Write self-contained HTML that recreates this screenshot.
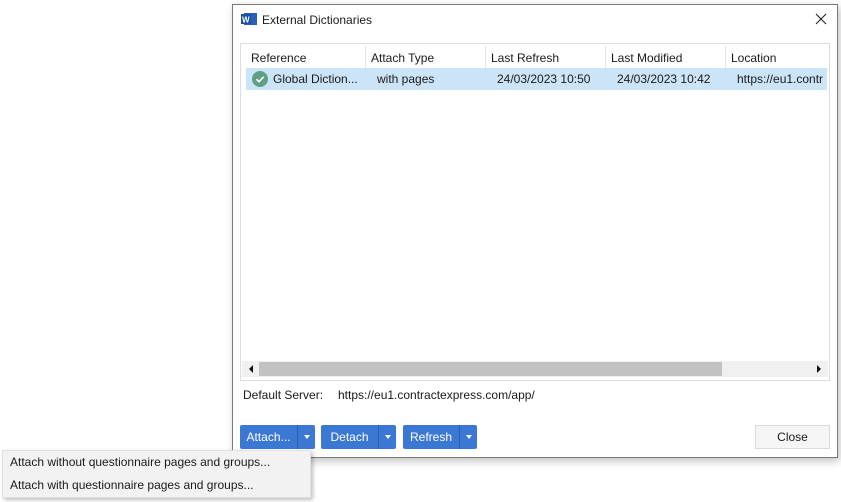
<!DOCTYPE html>
<html><head><style>
*{box-sizing:border-box;margin:0;padding:0}
body{width:841px;height:502px;background:#fff;position:relative;overflow:hidden;font-family:"Liberation Sans",sans-serif;font-size:12px;color:#1a1a1a}
.abs{position:absolute}
.dlg{left:232px;top:4px;width:606px;height:454px;background:#fff;border:1px solid #7a7a7a;box-shadow:2px 3px 8px rgba(0,0,0,.25)}
.col{position:absolute;top:0;height:22px;line-height:24px;padding-left:5px;border-right:1px solid #e3e3e3}
.btn{position:absolute;top:425px;height:24px;background:#3b78d4;color:#fff;line-height:24px;border-radius:2px}
.btn span{position:absolute;top:0;height:24px;text-align:center}
.btn .dd{border-left:1px solid #2a5fae;width:18px}
.dd:after{content:"";position:absolute;left:6px;top:10px;border:3px solid transparent;border-top:4px solid #fff}
</style></head><body>
<div class="abs dlg"></div>
<svg class="abs" style="left:241px;top:12px" width="16" height="14"><rect x="3" y="1" width="13" height="12" fill="#2b5fb8"/><rect x="0" y="2" width="10" height="10" fill="#1e4fa3"/><text x="1" y="10.5" font-size="8" font-weight="bold" fill="#fff" font-family="Liberation Sans">W</text></svg>
<div class="abs" style="left:262px;top:13px;font-size:12px">External Dictionaries</div>
<svg class="abs" style="left:815px;top:13px" width="12" height="12"><path d="M1 1L11 11M11 1L1 11" stroke="#222" stroke-width="1.1"/></svg>
<div class="abs" style="left:240px;top:43px;width:590px;height:338px;border:1px solid #dcdcdc"></div>
<div class="abs" style="left:246px;top:46px;width:581px;height:22px;background:#fff">
<div class="col" style="left:0;width:120px">Reference</div>
<div class="col" style="left:120px;width:120px">Attach Type</div>
<div class="col" style="left:240px;width:120px">Last Refresh</div>
<div class="col" style="left:360px;width:120px">Last Modified</div>
<div class="col" style="left:480px;width:101px;border:none">Location</div>
</div>
<div class="abs" style="left:246px;top:68px;width:581px;height:22px;background:#cce4f7;line-height:22px;white-space:nowrap;overflow:hidden">
<svg class="abs" style="left:6px;top:3px" width="16" height="16"><circle cx="8" cy="8" r="8" fill="#5f9f84"/><path d="M4.5 8.2L7 10.7L11.7 5.8" stroke="#fff" stroke-width="1.6" fill="none"/></svg>
<span class="abs" style="left:27px">Global Diction...</span>
<span class="abs" style="left:131px">with pages</span>
<span class="abs" style="left:251px">24/03/2023 10:50</span>
<span class="abs" style="left:371px">24/03/2023 10:42</span>
<span class="abs" style="left:491px">https://eu1.contr</span>
</div>
<div class="abs" style="left:242px;top:361px;width:586px;height:16px;background:#f0f0f0"></div>
<div class="abs" style="left:259px;top:362px;width:463px;height:14px;background:#c2c2c2"></div>
<div class="abs" style="left:249px;top:365px;border:4px solid transparent;border-right:4px solid #111;border-left:0"></div>
<div class="abs" style="left:817px;top:365px;border:4px solid transparent;border-left:4px solid #111;border-right:0"></div>
<div class="abs" style="left:243px;top:388px">Default Server:</div>
<div class="abs" style="left:338px;top:388px">https://eu1.contractexpress.com/app/</div>
<div class="btn" style="left:240px;width:75px"><span style="left:0;width:57px">Attach...</span><span class="dd" style="left:57px"></span></div>
<div class="btn" style="left:321px;width:75px"><span style="left:0;width:57px">Detach</span><span class="dd" style="left:57px"></span></div>
<div class="btn" style="left:403px;width:74px"><span style="left:0;width:56px">Refresh</span><span class="dd" style="left:56px"></span></div>
<div class="abs" style="left:755px;top:425px;width:75px;height:24px;border:1px solid #dadada;background:#f5f5f5;text-align:center;line-height:22px">Close</div>
<div class="abs" style="left:2px;top:450px;width:309px;height:48px;background:#f2f2f2;border:1px solid #e0e0e0;box-shadow:2px 2px 4px rgba(0,0,0,.25)"></div>
<div class="abs" style="left:10px;top:455px">Attach without questionnaire pages and groups...</div>
<div class="abs" style="left:10px;top:478px">Attach with questionnaire pages and groups...</div>
</body></html>
